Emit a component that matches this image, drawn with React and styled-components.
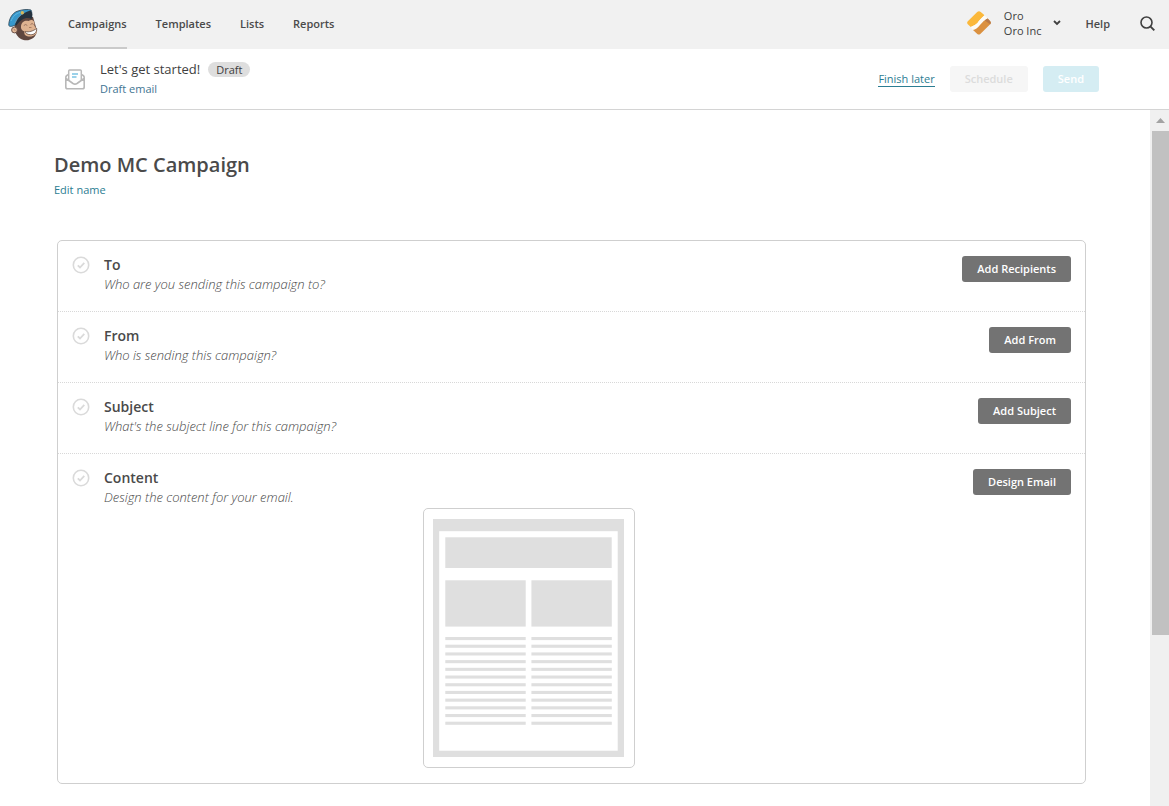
import React from "react";
import styled, { createGlobalStyle } from "styled-components";

const GlobalStyle = createGlobalStyle`
  *, *::before, *::after { box-sizing: border-box; }
  body {
    margin: 0;
    background: #fff;
    color: #404040;
    font-family: "Open Sans", "Noto Sans", sans-serif;
    font-size: 11px;
    line-height: 15px;
  }
  button { font-family: inherit; cursor: pointer; }
  a { text-decoration: none; color: inherit; }
`;

const Page = styled.div`
  display: flex;
  flex-direction: column;
  min-height: 100vh;
`;

const TopBar = styled.header`
  display: flex;
  align-items: stretch;
  min-height: 49px;
  padding: 0 14px 0 8px;
  background: #f1f1f1;
`;

const LogoLink = styled.a`
  display: flex;
  align-items: center;
  width: 60px;
`;

const Nav = styled.nav`
  display: flex;
  gap: 29px;
  flex: 1;
`;

const NavLink = styled.a`
  display: flex;
  align-items: center;
  border-bottom: 2px solid ${(p) => (p.$active ? "#cacaca" : "transparent")};
  color: #4a4a4a;
  font-weight: 600;
`;

const AccountButton = styled.button`
  display: flex;
  align-items: center;
  padding: 0 0 3px;
  border: 0;
  background: none;
  color: inherit;
  font-size: 11px;
  line-height: 15px;
  text-align: left;
`;

const AccountNames = styled.span`
  display: flex;
  flex-direction: column;
  margin: 0 12px 0 13px;
`;

const AccountName = styled.span`
  font-weight: 500;
`;

const HelpLink = styled.a`
  display: flex;
  align-items: center;
  margin: 0 30px 2px 24px;
  color: #4a4a4a;
  font-weight: 600;
`;

const SearchButton = styled.button`
  display: flex;
  align-items: center;
  padding: 0 0 2px;
  border: 0;
  background: none;
`;

const StatusBar = styled.section`
  display: flex;
  align-items: center;
  min-height: 61px;
  padding: 0 70px 0 65px;
  border-bottom: 1px solid #d4d4d4;
`;

const StatusText = styled.div`
  flex: 1;
  margin-left: 15px;
`;

const StatusLine = styled.div`
  display: flex;
  align-items: center;
  gap: 8px;
`;

const StatusTitle = styled.h2`
  margin: 0;
  font-size: 13px;
  line-height: 20px;
  font-weight: 500;
`;

const Badge = styled.span`
  padding: 0 8px;
  border-radius: 8px;
  background: #dedede;
  font-weight: 500;
`;

const StatusSub = styled.a`
  display: block;
  color: #3f7593;
  line-height: 20px;
`;

const StatusActions = styled.div`
  display: flex;
  align-items: center;
  gap: 15px;
`;

const FinishLink = styled.a`
  border-bottom: 1px solid #2c7d92;
  color: #2c7d92;
  line-height: 14px;
`;

const Button = styled.button`
  height: 26px;
  padding: 0 15px 1px;
  border: 0;
  border-radius: 3px;
  background: ${(p) => p.$bg || "#737373"};
  color: ${(p) => p.$fg || "#fff"};
  font-size: 11px;
  line-height: 15px;
  font-weight: 600;
  white-space: nowrap;
`;

const Body = styled.div`
  display: flex;
  flex: 1;
`;

const Main = styled.main`
  flex: 1;
  min-width: 0;
  padding: 40px 64px 22px 54px;
`;

const Title = styled.h1`
  margin: 0;
  color: #4a4a4a;
  font-size: 20px;
  line-height: 30px;
  font-weight: 600;
`;

const EditLink = styled.a`
  display: inline-block;
  color: #2c7d92;
  line-height: 20px;
`;

const Checklist = styled.section`
  margin: 40px 0 0 3px;
  border: 1px solid #cfcfcf;
  border-radius: 5px;
`;

const Item = styled.article`
  display: grid;
  grid-template-columns: 32px 1fr 117px;
  padding: 15px 14px ${(p) => (p.$last ? 15 : 16)}px 14px;
  border-bottom: ${(p) => (p.$last ? "0" : "1px dotted #d8d8d8")};
`;

const ItemTitle = styled.h3`
  margin: 0;
  color: #4a4a4a;
  font-size: 14px;
  line-height: 18px;
  font-weight: 600;
`;

const ItemText = styled.p`
  margin: 0;
  color: #484848;
  font-size: 13px;
  line-height: 21px;
  font-style: italic;
  font-weight: 300;
`;

const ItemAction = styled.div`
  text-align: right;
`;

const PreviewFrame = styled.div`
  width: 212px;
  margin: 0 auto;
  padding: 10px 10px 10px 9px;
  border: 1px solid #cfcfcf;
  border-radius: 5px;
  svg { display: block; }
`;

const Track = styled.div`
  display: flex;
  flex-direction: column;
  width: 19px;
  padding-left: 2px;
  background: #f0f0f0;
`;

const TrackArrow = styled.div`
  display: flex;
  align-items: center;
  justify-content: center;
  height: 21px;
`;

const Thumb = styled.div`
  height: 504px;
  background: #c1c1c1;
`;

const Logo = () => (
  <svg width="31" height="34" viewBox="0 0 31 34" aria-label="Home">
    <path d="M7 15 C5.500 22 8 30 15.500 32 C22 33.500 28.500 29.500 29 22.500 L25 9 L14 9Z" fill="#5f463f" />
    <path d="M13 18 C13.500 13 18 12 20.500 13 C24.500 10.500 27 13 26.300 17.500 C27 19.500 29 20.500 29.200 22.500 C29 26 26 28.500 22 28.500 C18 28.500 15.500 26.500 16.500 23.500 C14 22.500 12.500 21 13 18Z" fill="#dfb391" />
    <circle cx="6.500" cy="22" r="2.900" fill="#e3b998" stroke="#5f463f" strokeWidth=".9" />
    <path d="M5.500 21 q2 0 1.500 2" fill="none" stroke="#a87e66" strokeWidth=".8" />
    <path d="M17.300 23.500 C21 24.500 25 23 28.700 20.500 C29 24.500 26 27 22.500 26.700 C19 26.500 17.500 25.300 17.300 23.500Z" fill="#fff" stroke="#4f3831" strokeWidth=".7" />
    <path d="M15.800 17.500 q2-2 3.500 0 M22.500 16.500 q1.800-2 3 0" fill="none" stroke="#8a6554" strokeWidth=".8" />
    <path d="M21 19.500 h2.500" stroke="#9c7055" strokeWidth=".8" />
    <path d="M.8 17.500 C.5 12 4 4.500 10 3 C14 1.500 20 1 23 2 C24 4 24 6 23.500 8 C18 6 13 9 9.500 15 C7 18 2 19.500 .8 17.500Z" fill="#3798cc" stroke="#2e4352" strokeWidth=".8" />
    <path d="M3 13 C5 8 8 5.500 12 4.500" fill="none" stroke="#63b7df" />
    <path d="M7 16.500 C9 10 14 5 22.500 2.500 C24.500 4.500 25 8 23.500 11 C19 8.500 12.500 11 8.500 17.500Z" fill="#25323f" />
    <path d="M7 15 C9 10 12.500 6.500 16.500 4.700" fill="none" stroke="#7a94a3" strokeWidth=".7" />
    <circle cx="14.300" cy="4.800" r="1.700" fill="#d5b75a" />
  </svg>
);

const OroMark = () => (
  <svg width="24" height="24" viewBox="0 0 24 24" aria-hidden="true">
    <path d="M.8 10.200 L10.200 1 Q12 -.3 13.800 1 L17.500 4.300 Q12 9.500 10.500 12 Q8 14.500 3.800 16 L.8 13.200 Q-.5 11.700 .8 10.200Z" fill="#fbb83b" />
    <path d="M17.500 4.300 L20.700 7.600 Q16 9.800 13 14 Q9.500 18.500 6 19 L3.800 16 Q8 14.500 10.500 12 Q12 9.500 17.500 4.300Z" fill="#fdfbf7" />
    <path d="M20.700 7.600 L23.200 10.200 Q24.400 11.800 23.200 13.300 L13.300 23 Q11.800 24.200 10.300 23 L6 19 Q9.500 18.500 13 14 Q16 9.800 20.700 7.600Z" fill="#db9140" />
    <path d="M20.700 7.600 L23.200 10.200 Q24.400 11.800 23.200 13.300 L17.800 9.400 Q19 8.200 20.700 7.600Z" fill="#b97a48" />
  </svg>
);

const ChevronIcon = () => (
  <svg width="8" height="8" viewBox="0 0 8 8" aria-hidden="true">
    <path d="M1 2 L4 5 L7 2" fill="none" stroke="#404040" strokeWidth="1.8" />
  </svg>
);

const SearchIcon = () => (
  <svg width="15" height="15" viewBox="0 0 15 15" aria-hidden="true">
    <circle cx="6.500" cy="6.500" r="5.500" fill="none" stroke="#404040" strokeWidth="1.600" />
    <path d="M10.300 10.300 L14.300 14.300" stroke="#404040" strokeWidth="1.900" />
  </svg>
);

const MailIcon = () => (
  <svg width="20" height="21" viewBox="0 0 20 21" aria-hidden="true" fill="none">
    <path d="M3.700 12 V2 Q3.700 1 4.700 1 H15.300 Q16.300 1 16.300 2 V12" stroke="#b8b8b8" strokeWidth="1.500" />
    <path d="M3.500 5.500 Q.8 6.500 .8 8.500 V18 Q.8 19.800 2.500 19.800 H17.500 Q19.200 19.800 19.200 18 V8.500 Q19.200 6.500 16.500 5.500 M1 9.500 L8 14.500 Q10 15.800 12 14.500 L19 9.500" stroke="#b8b8b8" strokeWidth="1.600" />
    <path d="M7 5 H13 M7 8 H11.500" stroke="#7cc3e3" strokeWidth="1.400" />
  </svg>
);

const CheckIcon = () => (
  <svg width="18" height="18" viewBox="0 0 18 18" aria-hidden="true" fill="none" stroke="#dadada">
    <circle cx="9" cy="9" r="7.700" strokeWidth="1.600" />
    <path d="M5.800 9.300 L8 11.500 L12.300 6.800" strokeWidth="1.800" />
  </svg>
);

const LINES = Array.from({ length: 12 }, (_, i) => 118 + i * 7.7);

const TemplateDrawing = () => (
  <svg width="191" height="238" viewBox="0 0 191 238" role="img" aria-label="Email layout">
    <rect width="191" height="238" fill="#dfdfdf" />
    <rect x="6.200" y="12.200" width="178.500" height="219.500" fill="#fff" />
    <g fill="#dfdfdf">
      <rect x="12.300" y="18.300" width="166.400" height="30.700" />
      <rect x="12.300" y="61.300" width="80.400" height="46.300" />
      <rect x="98.400" y="61.300" width="80.400" height="46.300" />
      {LINES.map((y) => (
        <g key={y}>
          <rect x="12.300" y={y} width="80.400" height="3.100" />
          <rect x="98.400" y={y} width="80.400" height="3.100" />
        </g>
      ))}
    </g>
  </svg>
);

const NAV = ["Campaigns", "Templates", "Lists", "Reports"];

const ITEMS = [
  { title: "To", text: "Who are you sending this campaign to?", action: "Add Recipients" },
  { title: "From", text: "Who is sending this campaign?", action: "Add From" },
  { title: "Subject", text: "What's the subject line for this campaign?", action: "Add Subject" },
  { title: "Content", text: "Design the content for your email.", action: "Design Email", preview: true },
];

export default function App() {
  return (
    <Page>
      <GlobalStyle />
      <TopBar>
        <LogoLink href="#home"><Logo /></LogoLink>
        <Nav>
          {NAV.map((label, i) => (
            <NavLink key={label} href={`#${label.toLowerCase()}`} $active={i === 0}>{label}</NavLink>
          ))}
        </Nav>
        <AccountButton type="button">
          <OroMark />
          <AccountNames>
            <AccountName>Oro</AccountName>
            <span>Oro Inc</span>
          </AccountNames>
          <ChevronIcon />
        </AccountButton>
        <HelpLink href="#help">Help</HelpLink>
        <SearchButton type="button" aria-label="Search"><SearchIcon /></SearchButton>
      </TopBar>
      <StatusBar>
        <MailIcon />
        <StatusText>
          <StatusLine>
            <StatusTitle>Let's get started!</StatusTitle>
            <Badge>Draft</Badge>
          </StatusLine>
          <StatusSub href="#draft">Draft email</StatusSub>
        </StatusText>
        <StatusActions>
          <FinishLink href="#later">Finish later</FinishLink>
          <Button type="button" $bg="#f6f6f6" $fg="#dcdcdc">Schedule</Button>
          <Button type="button" $bg="#d5edf3">Send</Button>
        </StatusActions>
      </StatusBar>
      <Body>
        <Main>
          <Title>Demo MC Campaign</Title>
          <EditLink href="#edit-name">Edit name</EditLink>
          <Checklist>
            {ITEMS.map((item) => (
              <Item key={item.title} $last={item.preview}>
                <CheckIcon />
                <div>
                  <ItemTitle>{item.title}</ItemTitle>
                  <ItemText>{item.text}</ItemText>
                  {item.preview && <PreviewFrame><TemplateDrawing /></PreviewFrame>}
                </div>
                <ItemAction>
                  <Button type="button">{item.action}</Button>
                </ItemAction>
              </Item>
            ))}
          </Checklist>
        </Main>
        <Track aria-hidden="true">
          <TrackArrow>
            <svg width="9" height="5" viewBox="0 0 9 5"><path d="M0 5 L4.500 0 L9 5Z" fill="#a3a3a3" /></svg>
          </TrackArrow>
          <Thumb />
        </Track>
      </Body>
    </Page>
  );
}
